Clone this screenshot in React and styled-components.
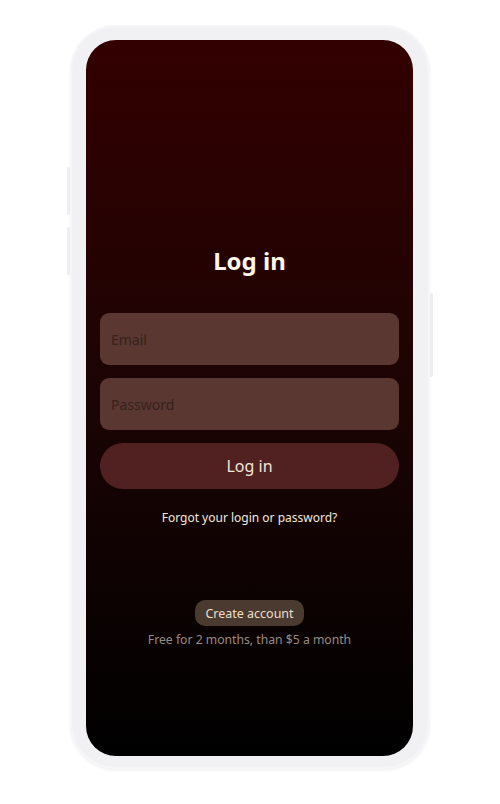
import styled, { createGlobalStyle } from "styled-components";

const GlobalStyle = createGlobalStyle`
  html, body {
    margin: 0;
    padding: 0;
    background: #ffffff;
  }

  body {
    font-family: "Noto Sans", "Open Sans", sans-serif;
  }
`;

export default function App() {
  return (
    <>
      <GlobalStyle />
      <Page>
        <Phone>
          <SideButton $side="left" $top={142} $height={48} />
          <SideButton $side="left" $top={202} $height={48} />
          <SideButton $side="right" $top={268} $height={84} />
          <Screen>
            <Title>Log in</Title>
            <Form>
              <Field placeholder="Email" type="email" />
              <Field placeholder="Password" type="password" />
              <LoginButton>Log in</LoginButton>
            </Form>
            <Forgot href="#">Forgot your login or password?</Forgot>
            <Signup>
              <CreateButton>Create account</CreateButton>
              <Note>Free for 2 months, than $5 a month</Note>
            </Signup>
          </Screen>
        </Phone>
      </Page>
    </>
  );
}

const Page = styled.div`
  width: 500px;
  height: 804px;
  display: flex;
  justify-content: center;
  padding-top: 25px;
  box-sizing: border-box;
`;

const Phone = styled.div`
  position: relative;
  width: 360px;
  height: 744px;
  box-sizing: border-box;
  padding: 15px 17px 13px 16px;
  background: #f1f1f4;
  border-radius: 46px;
  box-shadow: inset 0 0 0 2px #f6f6f8, 0 2px 3px rgba(0, 0, 0, 0.05);
  display: flex;
`;

const SideButton = styled.span`
  position: absolute;
  top: ${(p) => p.$top}px;
  ${(p) => (p.$side === "left" ? "left: -3px;" : "right: -3px;")}
  width: 3px;
  height: ${(p) => p.$height}px;
  background: #eeeef1;
  border-radius: 2px;
`;

const Screen = styled.div`
  flex: 1;
  border-radius: 30px;
  background: linear-gradient(180deg, #330000 0%, #1c0404 50%, #000000 100%);
  display: flex;
  flex-direction: column;
  align-items: center;
  padding: 206px 14px 0;
  overflow: hidden;
`;

const Title = styled.h1`
  margin: 0;
  font-size: 24px;
  line-height: 30px;
  font-weight: 700;
  color: #fff6e8;
`;

const Form = styled.div`
  width: 100%;
  margin-top: 37px;
  display: flex;
  flex-direction: column;
  gap: 13px;
`;

const Field = styled.input`
  height: 52px;
  box-sizing: border-box;
  border: none;
  outline: none;
  border-radius: 9px;
  background: #5a3730;
  padding: 0 11px;
  font-family: inherit;
  font-size: 14px;
  color: #f0e4d8;

  &::placeholder {
    color: #37221d;
  }
`;

const LoginButton = styled.button`
  height: 46px;
  border: none;
  border-radius: 23px;
  background: #512121;
  font-family: inherit;
  font-size: 16px;
  color: #f2e6d8;
  cursor: pointer;
`;

const Forgot = styled.a`
  margin-top: 21px;
  font-size: 12px;
  line-height: 16px;
  color: #f3e9dc;
  text-decoration: none;
`;

const Signup = styled.div`
  margin-top: 74px;
  display: flex;
  flex-direction: column;
  align-items: center;
  gap: 6px;
`;

const CreateButton = styled.button`
  height: 26px;
  padding: 0 10px;
  border: none;
  border-radius: 10px;
  background: #4b3a30;
  font-family: inherit;
  font-size: 12.5px;
  color: #efdfc9;
  cursor: pointer;
`;

const Note = styled.p`
  margin: 0;
  font-size: 12.2px;
  line-height: 16px;
  color: #9a8b82;
`;
